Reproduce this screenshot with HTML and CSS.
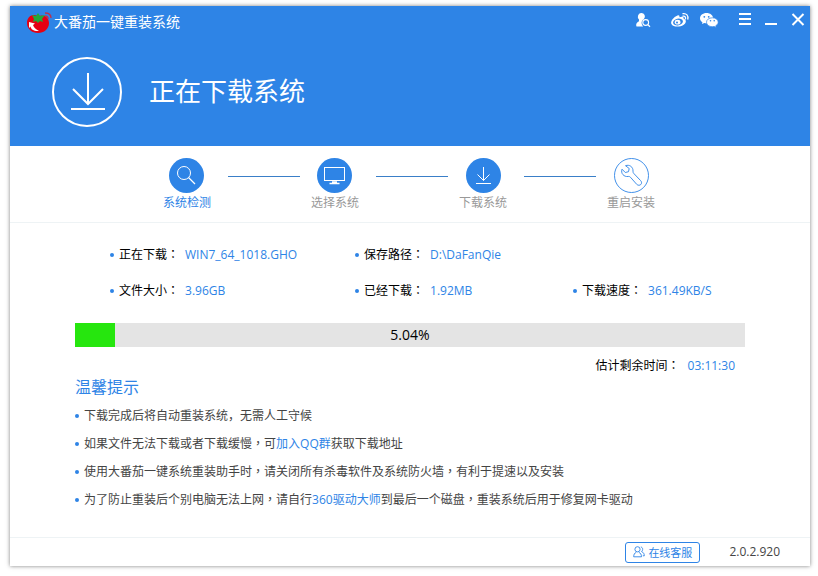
FILE: index.html
```html
<!DOCTYPE html>
<html lang="zh-CN">
<head>
    <meta charset="UTF-8">
    <meta name="viewport" content="width=device-width, initial-scale=1.0">
    <title>大番茄一键重装系统</title>
    <link rel="stylesheet" href="styles.css">
</head>
<body>
    <div class="window">
        <header class="header">
            <div class="titlebar">
                <svg class="logo" viewBox="0 0 26 22" width="26" height="22">
                    <path d="M12 4C6 1 1 5 1 11c0 6 5 10 11 10s11-4 11-10c0-6-5-9-11-7z" fill="#e60012"/>
                    <path d="M6 3l4 1 2-3 2 3 5-1-3 4 1 3-3-1-2 2-2-2-3 1 1-3z" fill="#22a83a"/>
                    <path d="M3 10l6 1.500-2 1.500c1 3 3 4.500 6 6-5 .5-8-1.500-8.500-4.500L3 16z" fill="#fff"/>
                    <path d="M19 4c2 0 3 1 3 3M19 1c4 0 6 2 6 5" fill="none" stroke="#b8324f" stroke-width="1.400"/>
                </svg>
                <h1 class="app-name">大番茄一键重装系统</h1>
                <div class="tools">
                    <button type="button" class="tool tool-user" aria-label="账号">
                        <svg viewBox="0 0 16 16" width="16" height="16">
                            <path d="M6 1a3.600 3.600 0 0 1 2.800 6.200C6 8.600 6 12 8.200 14.500H1.500c-1-2 .2-4.500 2.500-5.300V7.500A3.800 3.800 0 0 1 6 1z" fill="#fff"/>
                            <circle cx="10.700" cy="10.500" r="2.900" fill="none" stroke="#fff" stroke-width="1.100"/>
                            <path d="M12.800 12.600l2.200 2.200" stroke="#fff" stroke-width="1.300"/>
                        </svg>
                    </button>
                    <button type="button" class="tool tool-weibo" aria-label="微博">
                        <svg viewBox="0 0 20 16" width="20" height="16">
                            <path d="M7.500 3.500c1.500-.6 2.300.2 1.900 1.800 2.500-1 4.600-.7 4.200 1.400 3.400 1 2.700 4.500-.2 6.300-3.600 2.300-10.400 2.200-12-1C.2 9.400 3.600 5 7.500 3.500z" fill="#fff"/>
                            <ellipse cx="8" cy="10" rx="5" ry="3.300" transform="rotate(-12 8 10)" fill="#2e84e6"/>
                            <ellipse cx="7.600" cy="10.200" rx="2.900" ry="2.400" fill="#fff"/>
                            <circle cx="7" cy="10.500" r="1" fill="#2e84e6"/>
                            <path d="M13 4.200c1.800-.3 2.900.8 2.500 2.600M13 1.600c3.500-.5 5.500 2 4.800 5.400" fill="none" stroke="#fff" stroke-width="1.300" stroke-linecap="round"/>
                        </svg>
                    </button>
                    <button type="button" class="tool tool-wechat" aria-label="微信">
                        <svg viewBox="0 0 20 16" width="20" height="16">
                            <path d="M7.500 1C3.700 1 1 3.300 1 6.200c0 1.700.9 3.100 2.400 4L3 12l2.300-1.100c.8.2 1.500.3 2.400.3C11.300 11 14 8.900 14 6 14 3.200 11.200 1 7.500 1z" fill="#fff"/>
                            <path d="M13.300 5.800c-3.300 0-5.800 1.900-5.800 4.400s2.500 4.500 5.800 4.500c.7 0 1.300-.1 1.900-.3l2 1-.4-1.700c1.500-.9 2.400-2.100 2.400-3.500 0-2.500-2.600-4.400-5.900-4.400z" fill="#fff" stroke="#2e84e6" stroke-width=".7"/>
                            <circle cx="5.300" cy="4.800" r=".9" fill="#2e84e6"/>
                            <circle cx="9.700" cy="4.800" r=".9" fill="#2e84e6"/>
                            <circle cx="11.500" cy="8.800" r=".8" fill="#2e84e6"/>
                            <circle cx="15.200" cy="8.800" r=".8" fill="#2e84e6"/>
                        </svg>
                    </button>
                    <button type="button" class="tool tool-menu" aria-label="菜单">
                        <svg viewBox="0 0 14 14" width="14" height="14"><path d="M1 1h12M1 6h12M1 11h12" stroke="#fff" stroke-width="2"/></svg>
                    </button>
                    <button type="button" class="tool tool-min" aria-label="最小化">
                        <svg viewBox="0 0 14 14" width="14" height="14"><path d="M1 11h12" stroke="#fff" stroke-width="2"/></svg>
                    </button>
                    <button type="button" class="tool tool-close" aria-label="关闭">
                        <svg viewBox="0 0 14 14" width="14" height="14"><path d="M1.500 1l11 11M12.500 1l-11 11" stroke="#fff" stroke-width="2"/></svg>
                    </button>
                </div>
            </div>
            <div class="banner">
                <svg viewBox="0 0 72 72" width="72" height="72" fill="none" stroke="#fff" stroke-width="2">
                    <circle cx="36" cy="36" r="34"/>
                    <path d="M37 17v31M22 33l15 15 15-15M20 53h34"/>
                </svg>
                <h2 class="status">正在下载系统</h2>
            </div>
        </header>

        <ol class="steps">
            <li class="step current">
                <svg viewBox="0 0 35 35" width="35" height="35" fill="none" stroke="#fff">
                    <circle cx="17.500" cy="17.500" r="17.500" fill="#2e84e6" stroke="none"/>
                    <circle cx="15" cy="15" r="6.500"/>
                    <path d="M19.500 19.500l6.500 6.500" stroke-width="1.300"/>
                </svg>
                <span>系统检测</span>
            </li>
            <li class="line"></li>
            <li class="step">
                <svg viewBox="0 0 35 35" width="35" height="35" fill="none" stroke="#fff">
                    <circle cx="17.500" cy="17.500" r="17.500" fill="#2e84e6" stroke="none"/>
                    <rect x="7.500" y="9.500" width="20" height="13"/>
                    <path d="M15 24h5M12.500 25.500h10" stroke-width="1.300"/>
                </svg>
                <span>选择系统</span>
            </li>
            <li class="line"></li>
            <li class="step">
                <svg viewBox="0 0 35 35" width="35" height="35" fill="none" stroke="#fff">
                    <circle cx="17.500" cy="17.500" r="17.500" fill="#2e84e6" stroke="none"/>
                    <path d="M17.500 9v13.500M11.500 16.500l6 6 6-6M10 25.500h15"/>
                </svg>
                <span>下载系统</span>
            </li>
            <li class="line"></li>
            <li class="step">
                <svg viewBox="0 0 35 35" width="35" height="35" fill="none" stroke="#2e84e6">
                    <circle cx="17.500" cy="17.500" r="17" stroke-width=".9"/>
                    <path d="M11.500 7.700c4-1.500 7.800 1.300 7.500 5.500 0 1 .2 1.800 1 2.500l6.500 6.800c3 3-1 6.500-3.800 3.800l-6.200-7c-.7-.8-1.500-1-2.500-.8-4 .5-7.500-3-6-7.300l3.300 3.300 3.200-.8.700-3.200z" stroke-width=".9"/>
                </svg>
                <span>重启安装</span>
            </li>
        </ol>

        <main class="content">
            <dl class="info">
                <div class="item"><dt>正在下载<span class="punct" lang="zh-TW">：</span></dt><dd>WIN7_64_1018.GHO</dd></div>
                <div class="item"><dt>保存路径<span class="punct" lang="zh-TW">：</span></dt><dd>D:\DaFanQie</dd></div>
                <div class="item first"><dt>文件大小<span class="punct" lang="zh-TW">：</span></dt><dd>3.96GB</dd></div>
                <div class="item"><dt>已经下载<span class="punct" lang="zh-TW">：</span></dt><dd>1.92MB</dd></div>
                <div class="item"><dt>下载速度<span class="punct" lang="zh-TW">：</span></dt><dd>361.49KB/S</dd></div>
            </dl>

            <div class="progress" role="progressbar" aria-label="下载进度" aria-valuenow="5.04" aria-valuemin="0" aria-valuemax="100">
                <div class="progress-fill" style="width: 6%"></div>
                <span class="progress-text">5.04%</span>
            </div>
            <p class="remaining">估计剩余时间<span class="punct" lang="zh-TW">：</span><span class="time">03:11:30</span></p>

            <h3 class="tips-title">温馨提示</h3>
            <ul class="tips">
                <li>下载完成后将自动重装系统，无需人工守候</li>
                <li>如果文件无法下载或者下载缓慢<span class="punct" lang="zh-TW">，</span>可<a href="#">加入QQ群</a>获取下载地址</li>
                <li>使用大番茄一键系统重装助手时<span class="punct" lang="zh-TW">，</span>请关闭所有杀毒软件及系统防火墙<span class="punct" lang="zh-TW">，</span>有利于提速以及安装</li>
                <li>为了防止重装后个别电脑无法上网<span class="punct" lang="zh-TW">，</span>请自行<a href="#">360驱动大师</a>到最后一个磁盘<span class="punct" lang="zh-TW">，</span>重装系统后用于修复网卡驱动</li>
            </ul>
        </main>

        <footer class="footer">
            <button type="button" class="service">
                <svg viewBox="0 0 12 12" width="12" height="12" fill="none" stroke="#2e84e6" stroke-width=".9">
                    <circle cx="4.500" cy="3.300" r="2.600"/>
                    <path d="M3.300 6.300C1.500 7 .7 8.500.7 10.800h7.800c0-2.300-1-3.800-2.700-4.500M7.800 1c2 .2 2.600 3 .8 4.600 1.800.8 2.700 2 2.700 4.200h-1.500"/>
                </svg>
                在线客服
            </button>
            <span class="version">2.0.2.920</span>
        </footer>
    </div>
</body>
</html>
```
FILE: styles.css
```css
* {
    box-sizing: border-box;
}
body {
    margin: 0;
    padding: 6px 8px 10px 10px;
    background-color: #fff;
    font-family: "Open Sans", "Noto Sans CJK SC", sans-serif;
    font-size: 12px;
    line-height: 20px;
    color: #000;
}
h1, h2, h3, p, ol, ul, dl, dd {
    margin: 0;
    padding: 0;
    font-weight: normal;
}
ol, ul {
    list-style: none;
}
button {
    font-family: inherit;
    cursor: pointer;
}
svg {
    display: block;
    flex-shrink: 0;
}
a {
    color: #2e84e6;
    text-decoration: none;
}
.window {
    display: flex;
    flex-direction: column;
    min-height: calc(100vh - 16px);
    background-color: #fff;
    box-shadow: 0 0 4px rgba(0, 0, 0, 0.5);
}

/* header */
.header {
    height: 140px;
    background-color: #2e84e6;
    color: #fff;
}
.titlebar {
    display: flex;
    align-items: flex-start;
    padding: 4px 5px 0 16px;
}
.logo {
    margin-top: 2px;
}
.app-name {
    flex: 1;
    margin-left: 2px;
    font-size: 14px;
    line-height: 24px;
}
.tools {
    display: flex;
    align-items: center;
    height: 20px;
}
.tool {
    padding: 0;
    border: none;
    background: none;
}
.tool-weibo {
    margin-left: 19px;
}
.tool-wechat {
    margin-left: 9px;
}
.tool-menu {
    margin-left: 19px;
}
.tool-min {
    margin-left: 12px;
}
.tool-close {
    margin-left: 13px;
}
.banner {
    display: flex;
    align-items: center;
    gap: 26px;
    padding: 22px 41px 0;
}
.status {
    padding-bottom: 2px;
    font-size: 26px;
    line-height: 36px;
}

/* steps */
.steps {
    display: flex;
    justify-content: center;
    height: 77px;
    padding: 12px 2px 0 0;
    border-bottom: 1px solid #eef3f5;
}
.step {
    display: flex;
    flex-direction: column;
    align-items: center;
    color: #999;
}
.step.current {
    color: #2e84e6;
}
.line {
    width: 72px;
    height: 1px;
    margin: 18px 11px 0 17px;
    background-color: #3a7fc8;
}

/* content */
.content {
    flex: 1;
    padding: 22px 65px 0;
}
.info {
    display: grid;
    grid-template-columns: 245px 218px auto;
    row-gap: 16px;
    padding-left: 35px;
}
.item {
    display: flex;
}
.item.first {
    grid-column: 1;
}
.item::before,
.tips li::before {
    content: "";
    flex-shrink: 0;
    width: 4px;
    height: 4px;
    margin: 8px 5px 0 0;
    border-radius: 50%;
    background-color: #2e84e6;
}
.item dd {
    margin-left: 6px;
    color: #2e84e6;
}
.punct {
    font-family: "Noto Sans CJK TC", sans-serif;
    line-height: 1;
}
.progress {
    position: relative;
    height: 24px;
    margin-top: 22px;
    background-color: #e4e4e4;
}
.progress-fill {
    height: 100%;
    background-color: #26e60e;
}
.progress-text {
    position: absolute;
    inset: 0;
    font-size: 14px;
    line-height: 24px;
    text-align: center;
}
.remaining {
    margin-top: 9px;
    padding-right: 10px;
    text-align: right;
}
.time {
    margin-left: 8px;
    color: #2e84e6;
}
.tips-title {
    font-size: 16px;
    line-height: 22px;
    color: #2e84e6;
}
.tips {
    margin-top: 4px;
    color: #444;
}
.tips li {
    line-height: 28px;
}
.tips li::before {
    float: left;
    margin-top: 12px;
}

/* footer */
.footer {
    display: flex;
    align-items: center;
    justify-content: flex-end;
    gap: 29px;
    height: 29px;
    padding-right: 30px;
    border-top: 1px solid #eef3f5;
}
.service {
    display: flex;
    align-items: center;
    gap: 3px;
    height: 21px;
    padding: 0 7px;
    border: 1px solid #2e84e6;
    border-radius: 3px;
    background-color: #fff;
    font-size: 11px;
    color: #2e84e6;
}
.version {
    color: #444;
}
```
